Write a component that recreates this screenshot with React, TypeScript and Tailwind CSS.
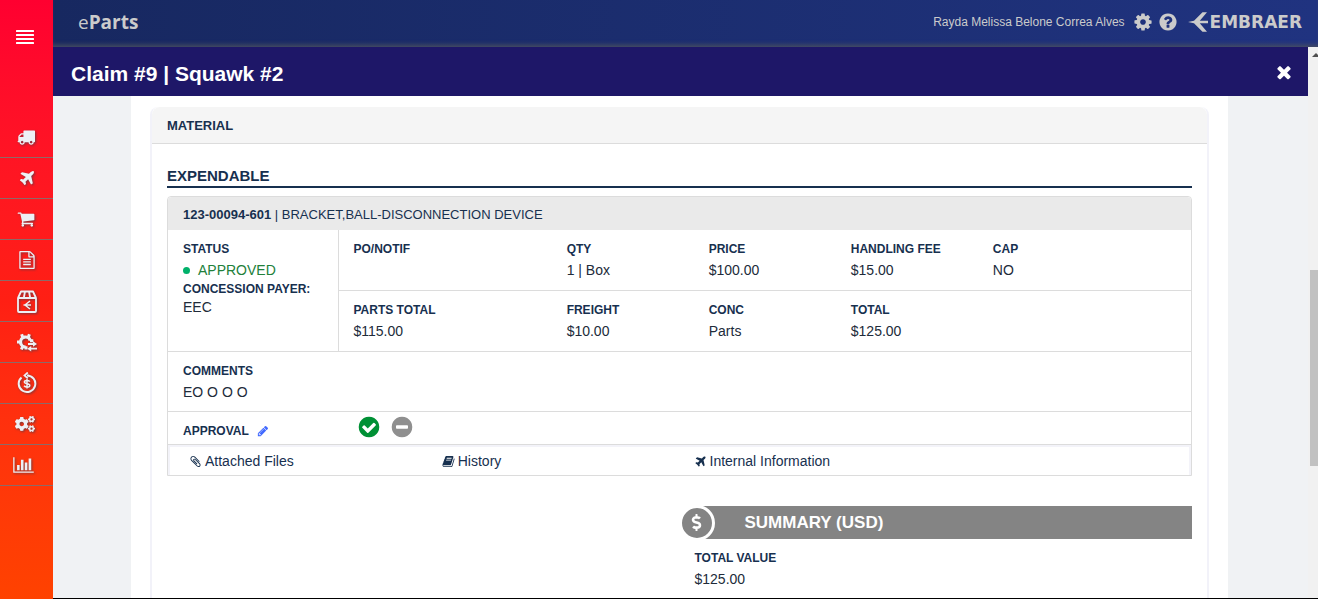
import type { ReactNode } from "react";
import { FaAlignJustify, FaCogs, FaDollarSign } from "react-icons/fa";

const DISC =
  "q0 209-103 385.5t-279.5 279.5-385.5 103-385.5-103-279.5-279.5-103-385.5 103-385.5 279.5-279.5 385.5-103 385.5 103 279.5 279.5 103 385.5z";

const PATHS = {
  cog: "M1152 896q0-106-75-181t-181-75-181 75-75 181 75 181 181 75 181-75 75-181zm512-109v222q0 12-8 23t-20 13l-185 28q-19 54-39 91 35 50 107 138 10 12 10 25t-9 23q-27 37-99 108t-94 71q-12 0-26-9l-138-108q-44 23-91 38-16 136-29 186-7 28-36 28h-222q-14 0-24.5-8.5t-11.5-21.5l-28-184q-49-16-90-37l-141 107q-10 9-25 9-14 0-25-11-126-114-165-168-7-10-7-23 0-12 8-23 15-21 51-66.5t54-70.5q-27-50-41-99l-183-27q-13-2-21-12.5t-8-23.5v-222q0-12 8-23t19-13l186-28q14-46 39-92-40-57-107-138-10-12-10-24 0-10 9-23 26-36 98.5-107.5t94.5-71.5q13 0 26 10l138 107q44-23 91-38 16-136 29-186 7-28 36-28h222q14 0 24.5 8.5t11.5 21.5l28 184q49 16 90 37l142-107q9-9 24-9 13 0 25 10 129 119 165 170 7 8 7 22 0 12-8 23-15 21-51 66.5t-54 70.5q26 50 41 98l183 28q13 2 21 12.5t8 23.5z",
  help: "M1024 1376v-192q0-14-9-23t-23-9h-192q-14 0-23 9t-9 23v192q0 14 9 23t23 9h192q14 0 23-9t9-23zm256-672q0-88-55.5-163t-138.5-116-170-41q-243 0-371 213-15 24 8 42l132 100q7 6 19 6 16 0 25-12 53-68 86-92 34-24 86-24 48 0 85.5 26t37.5 59q0 38-20 61t-68 45q-63 28-115.5 86.5t-52.5 125.5v36q0 14 9 23t23 9h192q14 0 23-9t9-23q0-19 21.5-49.5t54.5-49.5q32-18 49-28.5t46-35 44.5-48 28-60.5 12.5-81zm384 192" + DISC,
  check: "M1412 734q0-28-18-46l-91-90q-19-19-45-19t-45 19l-408 407-226-226q-19-19-45-19t-45 19l-91 90q-18 18-18 46 0 27 18 45l362 362q19 19 45 19 27 0 46-19l543-543q18-18 18-45zm252 162" + DISC,
  minus: "M1344 960v-128q0-26-19-45t-45-19h-768q-26 0-45 19t-19 45v128q0 26 19 45t45 19h768q26 0 45-19t19-45zm320-64" + DISC,
  truck: "M640 1408q0-52-38-90t-90-38-90 38-38 90 38 90 90 38 90-38 38-90zm-384-512h384v-256h-158q-13 0-22 9l-195 195q-9 9-9 22v30zm1280 512q0-52-38-90t-90-38-90 38-38 90 38 90 90 38 90-38 38-90zm256-1088v1024q0 15-4 26.5t-13.5 18.5-16.5 11.5-23.5 6-22.5 2-25.5 0-22.5-.5q0 106-75 181t-181 75-181-75-75-181h-384q0 106-75 181t-181 75-181-75-75-181h-64q-3 0-22.5.5t-25.5 0-22.5-2-23.5-6-16.5-11.5-13.5-18.5-4-26.5q0-26 19-45t45-19v-320q0-8-.5-35t0-38 2.5-34.5 6.5-37 14-30.5 22.5-30l198-198q19-19 50.5-32t58.5-13h160v-192q0-26 19-45t45-19h1024q26 0 45 19t19 45z",
  cart: "M704 1536q0 52-38 90t-90 38-90-38-38-90 38-90 90-38 90 38 38 90zm896 0q0 52-38 90t-90 38-90-38-38-90 38-90 90-38 90 38 38 90zm128-1088v512q0 24-16.5 42.5t-40.5 21.5l-1044 122q13 60 13 70 0 16-24 64h920q26 0 45 19t19 45-19 45-45 19h-1024q-26 0-45-19t-19-45q0-11 8-31.5t16-36 21.5-40 15.5-29.5l-177-823h-204q-26 0-45-19t-19-45 19-45 45-19h256q16 0 28.5 6.5t19.5 15.5 13 24.5 8 26 5.5 29.5 4.5 26h1201q26 0 45 19t19 45z",
  plane: "M1568 224q44 52 12 148t-108 172l-161 161 160 696q5 19-12 33l-128 96q-7 6-19 6-4 0-7-1-15-3-21-16l-279-508-259 259 53 194q5 17-8 31l-96 96q-9 9-23 9h-2q-15-2-24-13l-189-252-252-189q-11-7-13-23-1-13 9-25l96-97q9-9 23-9 6 0 8 1l194 53 259-259-508-279q-14-8-17-24-2-16 9-27l128-128q14-13 30-8l665 159 160-160q76-76 172-108t148 12z",
  file: "M1596 380q28 28 48 76t20 88v1152q0 40-28 68t-68 28h-1344q-40 0-68-28t-28-68v-1600q0-40 28-68t68-28h896q40 0 88 20t76 48zm-444-244v376h376q-10-29-22-41l-313-313q-12-12-41-22zm384 1528v-1024h-416q-40 0-68-28t-28-68v-416h-768v1536h1280zm-1024-864q0-14 9-23t23-9h704q14 0 23 9t9 23v64q0 14-9 23t-23 9h-704q-14 0-23-9t-9-23v-64zm736 224q14 0 23 9t9 23v64q0 14-9 23t-23 9h-704q-14 0-23-9t-9-23v-64q0-14 9-23t23-9h704zm0 256q14 0 23 9t9 23v64q0 14-9 23t-23 9h-704q-14 0-23-9t-9-23v-64q0-14 9-23t23-9h704z",
  close: "M1490 1322q0 40-28 68l-136 136q-28 28-68 28t-68-28l-294-294-294 294q-28 28-68 28t-68-28l-136-136q-28-28-28-68t28-68l294-294-294-294q-28-28-28-68t28-68l136-136q28-28 68-28t68 28l294 294 294-294q28-28 68-28t68 28l136 136q28 28 28 68t-28 68l-294 294 294 294q28 28 28 68z",
  pencil: "M491 1536l91-91-235-235-91 91v107h128v128h107zm523-928q0-22-22-22-10 0-17 7l-542 542q-7 7-7 17 0 22 22 22 10 0 17-7l542-542q7-7 7-17zm-54-192l416 416-832 832h-416v-416zm683 96q0 53-37 90l-166 166-416-416 166-165q36-38 90-38 53 0 91 38l235 234q37 39 37 91z",
  book: "M1703 478q40 57 18 129l-275 906q-19 64-76.5 107.5t-122.5 43.5h-923q-77 0-148.5-53.5t-99.5-131.5q-24-67-2-127 0-4 3-27t4-37q1-8-3-21.5t-3-19.5q2-11 8-21t16.5-23.5 16.5-23.5q23-38 45-91.5t30-91.5q3-10 .5-30t-.5-28q3-11 17-28t17-23q21-36 42-92t25-90q1-9-2.5-32t.5-28q4-13 22-30.5t22-22.5q19-26 42.5-84.5t27.5-96.5q1-8-3-25.5t-2-26.5q2-8 9-18t18-23 17-21q8-12 16.5-30.5t15-35 16-36 19.5-32 26.5-23.5 36-11.5 47.5 5.5l-1 3q38-9 51-9h761q74 0 114 56t18 130l-274 906q-36 119-71.5 153.5t-128.5 34.5h-869q-27 0-38 15-11 16-1 43 24 70 144 70h923q29 0 56-15.5t35-41.5l300-987q7-22 5-57 38 15 59 43zm-1064 2q-4 13 2 22.5t20 9.5h608q13 0 25.5-9.5t16.5-22.5l21-64q4-13-2-22.5t-20-9.5h-608q-13 0-25.5 9.5t-16.5 22.5zm-83 256q-4 13 2 22.5t20 9.5h608q13 0 25.5-9.5t16.5-22.5l21-64q4-13-2-22.5t-20-9.5h-608q-13 0-25.5 9.5t-16.5 22.5z",
  clip: "M1596 1385q0 117-79 196t-196 79q-135 0-235-100l-777-776q-113-115-113-271 0-159 110-270t269-111q158 0 273 113l605 606q10 10 10 22 0 16-30.5 46.5t-46.5 30.5q-13 0-23-10l-606-607q-79-77-181-77-106 0-179 75t-73 181q0 105 76 181l776 777q63 63 145 63 64 0 106-42t42-106q0-82-63-145l-581-581q-26-24-60-24-29 0-48 19t-19 48q0 32 25 59l410 410q10 10 10 22 0 16-31 47t-47 31q-12 0-22-10l-410-410q-63-61-63-149 0-82 57-139t139-57q88 0 149 63l581 581q100 98 100 235z",
};

function Icon({ name, className }: { name: keyof typeof PATHS; className: string }) {
  return (
    <svg viewBox="0 0 1792 1792" fill="currentColor" aria-hidden="true" className={className}>
      <path d={PATHS[name]} />
    </svg>
  );
}

function ChartIcon() {
  return (
    <svg viewBox="0 0 2048 1792" fill="currentColor" aria-hidden="true" className="mr-1.5 h-[18px] w-[21px]">
      <path d="M640 896v512h-256v-512h256zm384-512v1024h-256v-1024h256zm1024 1152v128h-2048v-1536h128v1408h1920zm-640-896v768h-256v-768h256zm384-384v1152h-256v-1152h256z" />
    </svg>
  );
}

function BoxIcon() {
  return (
    <svg viewBox="0 0 20 23" fill="none" stroke="currentColor" strokeWidth="1.8" aria-hidden="true" className="h-[23px] w-5">
      <path d="M1 8h18v13a1 1 0 0 1-1 1H2a1 1 0 0 1-1-1zM1 8l3-6.5h12L19 8M6.8 8 8 1.500M13.2 8 12 1.500" strokeLinejoin="round" />
      <path d="M13 11 8 15l5 4M6.500 15H14" strokeWidth="1.500" />
    </svg>
  );
}

function GearSwapIcon() {
  return (
    <svg viewBox="0 0 20 19" fill="none" stroke="currentColor" aria-hidden="true" className="h-[19px] w-5">
      <path d="M13.300 7.500A5 5 0 1 0 8.800 14" strokeWidth="3.200" />
      <path
        d="M5.800 4.500 4.600 1.200M11.200 4.500l1.200-3.300M3.800 9H0M5.800 13.200l-1.400 3.300M13 7.800h3.300M9 13.200v3.300"
        strokeWidth="3"
      />
      <path d="M11 11h5.500M20 15.700h-6" strokeWidth="1.800" />
      <path d="m16 8.300 4 2.700-4 2.700zM14.200 13l-4 2.700 4 2.700z" fill="currentColor" stroke="none" />
    </svg>
  );
}

function RefundIcon() {
  return (
    <svg viewBox="0 0 20 22" fill="none" stroke="currentColor" aria-hidden="true" className="h-[22px] w-5">
      <path d="M4.500 5.500a8.300 8.300 0 1 0 5.500-2.100h2" strokeWidth="2" />
      <path d="M10.800.5 7.500 3.400l3.300 3" strokeWidth="1.800" />
      <path d="M12.800 9.600c-.6-.8-1.600-1.100-2.800-1.100-1.500 0-2.600.6-2.600 1.600 0 2.300 5.400.9 5.400 3.300 0 1-1.200 1.700-2.700 1.700-1.400 0-2.400-.5-3-1.300M10 7v9.600" strokeWidth="1.500" />
    </svg>
  );
}

const NAV: { label: string; icon: ReactNode }[] = [
  { label: "Shipping", icon: <Icon name="truck" className="mr-0.5 h-[18px] w-[18px]" /> },
  { label: "Aircraft", icon: <Icon name="plane" className="h-[18px] w-[18px]" /> },
  { label: "Orders", icon: <Icon name="cart" className="mr-0.5 h-[18px] w-[18px]" /> },
  { label: "Documents", icon: <Icon name="file" className="h-[18px] w-[18px]" /> },
  { label: "Parts", icon: <BoxIcon /> },
  { label: "Exchange", icon: <GearSwapIcon /> },
  { label: "Refunds", icon: <RefundIcon /> },
  { label: "Settings", icon: <FaCogs className="mr-1 h-5 w-5" /> },
  { label: "Reports", icon: <ChartIcon /> },
];

function Sidebar() {
  return (
    <nav aria-label="Main" className="flex w-[53px] shrink-0 flex-col bg-linear-to-b from-[#ff0030] via-[#ff1f14] to-[#ff4200] text-[#eef0f5]">
      <button aria-label="Menu" className="flex h-[74px] items-center justify-center pr-1 text-white">
        <FaAlignJustify className="h-4 w-[18px]" preserveAspectRatio="none" />
      </button>
      <ul className="mt-[43px]">
        {NAV.map((item) => (
          <li key={item.label} className="h-[41px] border-b border-[#8c6a68]">
            <a
              href="#"
              aria-label={item.label}
              className="flex h-full items-center justify-center drop-shadow-[1px_1px_1px_rgba(90,60,70,0.8)]"
            >
              {item.icon}
            </a>
          </li>
        ))}
      </ul>
    </nav>
  );
}

function Header() {
  return (
    <header className="flex h-[47px] shrink-0 items-center justify-between bg-linear-to-r from-[#172860] to-[#203380] pr-4 pb-1 pl-[25px] text-[#cbcbcb] shadow-[inset_0_-5px_5px_-3px_#4a4f60]">
      <div className="font-['Open_Sans',sans-serif] text-[19px] leading-6">
        e<b>Parts</b>
      </div>
      <div className="flex items-center">
        <span className="text-xs">Rayda Melissa Belone Correa Alves</span>
        <button aria-label="Settings" className="ml-2">
          <Icon name="cog" className="h-5 w-5" />
        </button>
        <button aria-label="Help" className="ml-[5px]">
          <Icon name="help" className="h-5 w-5" />
        </button>
        <div className="ml-2.5 flex items-center">
          <svg viewBox="0 0 20 20" fill="currentColor" aria-hidden="true" className="h-5 w-5">
            <path d="M0 10 6 8.800 14.500.2H19L11.800 8.800H20v2.400h-8.200L19 19.800h-4.500L6 11.200z" />
          </svg>
          <span className="ml-0.5 font-['DejaVu_Sans',sans-serif] text-[17px] leading-4 font-bold">EMBRAER</span>
        </div>
      </div>
    </header>
  );
}

function Field({ label, value, className }: { label: string; value?: string; className: string }) {
  return (
    <div className={`px-[15px] pt-[11px] ${className}`}>
      <dt className="text-xs leading-4 font-bold text-[#17304f]">{label}</dt>
      <dd className="mt-[5px] text-sm leading-4">{value}</dd>
    </div>
  );
}

function PartCard() {
  return (
    <article className="mt-2 rounded-t border border-[#dcdcdc]">
      <h3 className="rounded-t bg-[#eaeaea] px-[15px] pt-2.5 pb-[7px] text-[13px] leading-4 text-[#17304f]">
        <b>123-00094-601</b> | BRACKET,BALL-DISCONNECTION DEVICE
      </h3>
      <div className="grid grid-cols-12 border-b border-[#dcdcdc]">
        <dl className="col-span-2 border-r border-[#dcdcdc] pt-[11px] pl-[15px]">
          <dt className="text-xs leading-4 font-bold text-[#17304f]">STATUS</dt>
          <dd className="mt-[5px] flex items-center gap-2 text-sm leading-4 text-[#22803a]">
            <span className="h-[7px] w-[7px] rounded-full bg-[#00b16a]" />
            APPROVED
          </dd>
          <dt className="mt-[3px] text-xs leading-4 font-bold whitespace-nowrap text-[#17304f]">CONCESSION PAYER:</dt>
          <dd className="mt-0.5 text-sm leading-4">EEC</dd>
        </dl>
        <div className="col-span-10">
          <dl className="grid h-[61px] grid-cols-12 border-b border-[#dcdcdc]">
            <Field label="PO/NOTIF" className="col-span-3" />
            <Field label="QTY" value="1 | Box" className="col-span-2" />
            <Field label="PRICE" value="$100.00" className="col-span-2" />
            <Field label="HANDLING FEE" value="$15.00" className="col-span-2" />
            <Field label="CAP" value="NO" className="col-span-3" />
          </dl>
          <dl className="grid h-[60px] grid-cols-12">
            <Field label="PARTS TOTAL" value="$115.00" className="col-span-3" />
            <Field label="FREIGHT" value="$10.00" className="col-span-2" />
            <Field label="CONC" value="Parts" className="col-span-2" />
            <Field label="TOTAL" value="$125.00" className="col-span-2" />
          </dl>
        </div>
      </div>
      <dl className="h-[60px] border-b border-[#dcdcdc]">
        <Field label="COMMENTS" value="EO O O O" className="" />
      </dl>
      <div className="flex h-[33px] border-b border-[#dcdcdc] pl-[15px]">
        <div className="flex w-[174px] items-center gap-2 pt-1.5">
          <span className="text-xs leading-4 font-bold text-[#17304f]">APPROVAL</span>
          <button aria-label="Edit approval" className="text-[#4169ff]">
            <Icon name="pencil" className="h-3 w-3" />
          </button>
        </div>
        <div className="flex items-start gap-[9px] pt-[3px]">
          <button aria-label="Approve" className="text-[#009035]">
            <Icon name="check" className="h-6 w-6" />
          </button>
          <button aria-label="Reject" className="text-[#8f8f8f]">
            <Icon name="minus" className="h-6 w-6" />
          </button>
        </div>
      </div>
      <div className="grid h-[30px] grid-cols-4 items-center border-x-2 border-t-2 border-[#f3f3f9] px-1 text-sm leading-4 text-[#17304f]">
        <a href="#" className="flex items-center gap-[3px] pl-[15px]">
          <Icon name="clip" className="h-[13px] w-[13px]" />
          Attached Files
        </a>
        <a href="#" className="flex items-center gap-[3px] pl-[15px]">
          <Icon name="book" className="h-[13px] w-[13px]" />
          History
        </a>
        <a href="#" className="flex items-center gap-[3px] pl-3.5 whitespace-nowrap">
          <Icon name="plane" className="h-[13px] w-[13px]" />
          Internal Information
        </a>
      </div>
    </article>
  );
}

function Summary() {
  return (
    <section className="mt-[30px] ml-[50%]">
      <div className="ml-4 flex h-[33px] items-center bg-[#848484] text-white">
        <div className="-ml-[17px] flex h-9 w-9 shrink-0 items-center justify-center rounded-full border-3 border-white bg-[#848484]">
          <FaDollarSign className="h-[17px] w-[17px]" />
        </div>
        <h2 className="ml-[30px] text-[17px] leading-5 font-bold">SUMMARY (USD)</h2>
      </div>
      <dl>
        <Field label="TOTAL VALUE" value="$125.00" className="" />
      </dl>
    </section>
  );
}

function ScrollRail() {
  return (
    <div aria-hidden="true" className="flex w-2.5 shrink-0 flex-col overflow-hidden bg-[#f1f1f1] pl-0.5">
      <svg viewBox="0 0 8 10" className="ml-0.5 h-2.5 w-2" fill="#505050">
        <path d="M0 10 4 6l4 4z" />
      </svg>
      <div className="mt-[213px] h-[196px] bg-[#c1c1c1]" />
    </div>
  );
}

export default function App() {
  return (
    <div className="flex h-screen overflow-hidden bg-[#f0f2f4] font-['Liberation_Sans',Arial,sans-serif] text-[#212b3a]">
      <Sidebar />
      <div className="flex min-w-0 flex-1 flex-col border-b border-black">
        <Header />
        <div className="flex min-h-0 flex-1">
          <div className="flex min-w-0 flex-1 flex-col">
            <div className="flex shrink-0 items-center justify-between bg-[#1e1768] pt-[13px] pr-3.5 pb-2 pl-[18px] text-white">
              <h1 className="text-[21px] leading-7 font-bold">Claim #9 | Squawk #2</h1>
              <button aria-label="Close">
                <Icon name="close" className="mb-1 h-5 w-5" />
              </button>
            </div>
            <main className="min-h-0 flex-1 overflow-hidden pr-20 pl-[78px]">
              <div className="h-full bg-white px-[19px] pt-[11px]">
                <section className="h-[640px] rounded-t-lg border-2 border-t-0 border-[#f2f2f9]">
                  <h2 className="rounded-t-lg border-b border-[#dcdcdc] bg-[#f5f5f5] px-[15px] pt-2.5 pb-[9px] text-[13px] leading-[17px] font-bold text-[#17304f]">
                    MATERIAL
                  </h2>
                  <div className="px-[15px] pt-[21px]">
                    <h2 className="border-b-2 border-[#17304f] text-[15px] leading-[21px] font-bold text-[#17304f]">EXPENDABLE</h2>
                    <PartCard />
                    <Summary />
                  </div>
                </section>
              </div>
            </main>
          </div>
          <ScrollRail />
        </div>
      </div>
    </div>
  );
}
